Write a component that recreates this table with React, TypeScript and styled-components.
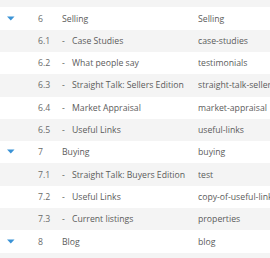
import React from "react";
import styled, { createGlobalStyle } from "styled-components";

const GlobalStyle = createGlobalStyle`
  html, body {
    margin: 0;
    padding: 0;
    background: #ffffff;
    overflow: hidden;
  }
  body {
    font-family: "Open Sans", "Liberation Sans", sans-serif;
  }
`;

type Page = {
  num: string;
  title: string;
  slug: string;
  parent?: boolean;
};

const pages: Page[] = [
  { num: "6", title: "Selling", slug: "Selling", parent: true },
  { num: "6.1", title: "Case Studies", slug: "case-studies" },
  { num: "6.2", title: "What people say", slug: "testimonials" },
  { num: "6.3", title: "Straight Talk: Sellers Edition", slug: "straight-talk-sellers-edition" },
  { num: "6.4", title: "Market Appraisal", slug: "market-appraisal" },
  { num: "6.5", title: "Useful Links", slug: "useful-links" },
  { num: "7", title: "Buying", slug: "buying", parent: true },
  { num: "7.1", title: "Straight Talk: Buyers Edition", slug: "test" },
  { num: "7.2", title: "Useful Links", slug: "copy-of-useful-links" },
  { num: "7.3", title: "Current listings", slug: "properties" },
  { num: "8", title: "Blog", slug: "blog", parent: true },
];

const Table = styled.div`
  width: 360px;
  height: 258px;
  background: #f4f4f4;
  font-size: 8.7px;
  color: #5b5b5b;
`;

const Spacer = styled.div`
  height: 7.4px;
  background: #f4f4f4;
`;

const Row = styled.div<{ $striped: boolean }>`
  display: grid;
  grid-template-columns: 38px 24px 136px 1fr;
  align-items: center;
  height: 22.3px;
  background: ${(p) => (p.$striped ? "#f4f4f4" : "#ffffff")};
  white-space: nowrap;
`;

const Toggle = styled.div`
  display: flex;
  align-items: center;
  padding-left: 7px;
  padding-bottom: 1px;
`;

const Num = styled.div`
  color: #6a6a6a;
`;

const Title = styled.div`
  display: flex;
  align-items: center;
`;

const Dash = styled.span`
  display: inline-block;
  width: 10px;
`;

const Slug = styled.div`
  overflow: hidden;
`;

const Arrow = () => (
  <svg width="8" height="5" viewBox="0 0 8 5">
    <path d="M0 0.5 H7.5 L3.75 4.5 Z" fill="#3b93d6" />
  </svg>
);

export default function App() {
  return (
    <>
      <GlobalStyle />
      <Table>
        <Spacer />
        {pages.map((p, i) => (
          <Row key={p.num} $striped={i % 2 === 1}>
            <Toggle>{p.parent && <Arrow />}</Toggle>
            <Num>{p.num}</Num>
            <Title>
              {!p.parent && <Dash>-</Dash>}
              {p.title}
            </Title>
            <Slug>{p.slug}</Slug>
          </Row>
        ))}
      </Table>
    </>
  );
}
